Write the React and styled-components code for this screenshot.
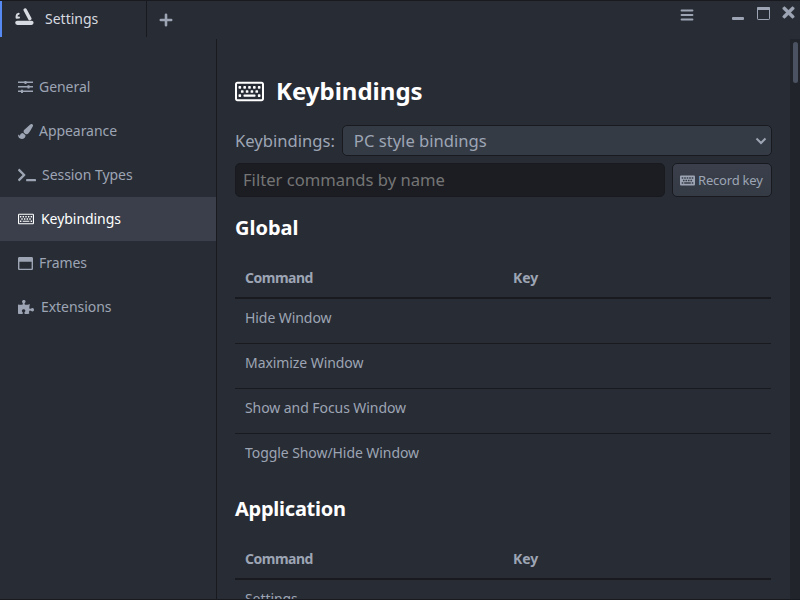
import React from 'react';
import styled, { createGlobalStyle, css } from 'styled-components';
import {
  FaRegKeyboard, FaKeyboard, FaPaintBrush, FaTerminal, FaRegWindowMaximize,
  FaPuzzlePiece, FaTimes,
} from 'react-icons/fa';

const GlobalStyle = createGlobalStyle`
  * { box-sizing: border-box; }
  body {
    margin: 0;
    overflow: hidden;
    background: #282c34;
    color: #9da5b4;
    font-family: "Noto Sans", sans-serif;
    font-size: 14px;
  }
  svg { display: block; flex: none; }
`;

const Window = styled.div`
  width: 800px;
  height: 600px;
  display: flex;
  flex-direction: column;
  overflow: hidden;
  background: #282c34;
  border-top: 1px solid #181a1f;
  border-bottom: 1px solid #181a1f;
`;

const TitleBar = styled.header`
  height: 38px;
  flex: none;
  display: flex;
  align-items: flex-start;
`;

const Tab = styled.div`
  width: 147px;
  height: 36px;
  display: flex;
  align-items: center;
  gap: 10px;
  padding-left: 13px;
  border-left: 2px solid #568af2;
  border-right: 1px solid #181a1f;
  color: #d7dae0;
`;

const IconButton = styled.div`
  width: ${(p) => p.$width}px;
  margin-top: ${(p) => p.$top}px;
  margin-left: ${(p) => p.$left || 0}px;
  margin-right: ${(p) => p.$gap || 0}px;
`;

const WindowControls = styled.div`
  margin-left: auto;
  display: flex;
`;

const Body = styled.div`
  flex: 1;
  min-height: 0;
  display: flex;
`;

const Sidebar = styled.nav`
  width: 217px;
  flex: none;
  padding-top: 26px;
  border-right: 1px solid #181a1f;
`;

const NavItem = styled.div`
  height: 44px;
  display: flex;
  align-items: center;
  gap: ${(p) => p.$gap || 7}px;
  padding-left: 18px;
  ${(p) => p.$active && css`
    background: #3a3f4b;
    color: #ffffff;
  `}
`;

const Label = styled.span`
  white-space: nowrap;
  line-height: 20px;
  letter-spacing: ${(p) => p.$spacing || 0}px;
`;

const Content = styled.main`
  flex: 1;
  min-width: 0;
  padding: 36px 18px 0 18px;
  overflow: hidden;
`;

const PageTitle = styled.h1`
  margin: 0;
  height: 32px;
  display: flex;
  align-items: center;
  gap: 12px;
  color: #ffffff;
  font-size: 24px;
  font-weight: 700;
  line-height: 32px;
`;

const FieldRow = styled.div`
  display: flex;
  align-items: center;
  height: ${(p) => p.$height}px;
  margin-top: ${(p) => p.$top}px;
  gap: 7px;
  font-size: 16.6px;
`;

const Select = styled.div`
  flex: 1;
  height: 31px;
  display: flex;
  align-items: center;
  justify-content: space-between;
  padding: 0 4px 0 11px;
  background: #353b45;
  border: 1px solid #181a1f;
  border-radius: 5px;
`;

const FilterInput = styled.input`
  width: 430px;
  height: 34px;
  padding: 0 7px 2px;
  background: #1b1d23;
  border: 1px solid #181a1f;
  border-radius: 5px;
  font: inherit;
  &::placeholder { color: #757575; opacity: 1; }
`;

const RecordButton = styled.div`
  flex: 1;
  height: 34px;
  display: flex;
  align-items: center;
  gap: 3px;
  padding-left: 7px;
  font-size: 13px;
  background: linear-gradient(#3a3f4b, #353b45);
  border: 1px solid #181a1f;
  border-radius: 5px;
`;

const SectionTitle = styled.h2`
  margin: ${(p) => p.$top}px 0 0;
  color: #ffffff;
  font-size: 20px;
  line-height: 28px;
  height: 28px;
  letter-spacing: ${(p) => p.$spacing || 0}px;
`;

const Table = styled.div`
  margin: 16px 1px 0 0;
`;

const TableRow = styled.div`
  height: 45px;
  display: grid;
  grid-template-columns: 268px 1fr;
  align-items: start;
  padding: 9px 10px 0;
  border-bottom: 1px solid ${(p) => (p.$last ? 'transparent' : '#181a1f')};
`;

const TableHead = styled(TableRow)`
  height: 41px;
  padding-top: 10px;
  font-weight: 700;
  border-bottom-width: 2px;
`;

const Scrollbar = styled.div`
  width: 10px;
  flex: none;
  padding: 3px 2px 0 3px;
  background: #21252b;
`;

const Thumb = styled.div`
  height: 41px;
  border-radius: 3px;
  background: #4b5362;
`;

const LogoIcon = () => (
  <svg width="20" height="22" viewBox="0 0 20 22">
    <g fill="none" stroke="currentColor" strokeLinecap="round" strokeLinejoin="round">
      <path d="M2.3 14.8h14.2" strokeWidth="4.2" />
      <path d="M10.2 2l4.6 8.6" strokeWidth="3.4" />
      <path d="M3.7 5.8Q1.7 6.2 1.6 8v1.8L4 9.6" strokeWidth="2" />
    </g>
  </svg>
);

const PlusIcon = () => (
  <svg width="14" height="14" viewBox="0 0 14 14">
    <path d="M7 1.8v10.4M1.8 7h10.4" stroke="currentColor" strokeWidth="2.6" strokeLinecap="round" />
  </svg>
);

const MenuIcon = () => (
  <svg width="14" height="12" viewBox="0 0 14 12">
    <path d="M1.5 1.5h11M1.5 6h11M1.5 10.5h11" stroke="currentColor" strokeWidth="1.8" strokeLinecap="round" />
  </svg>
);

const SlidersIcon = () => (
  <svg width="15" height="13" viewBox="0 0 15 13">
    <path fill="currentColor" d="M0 .5h15v1.6H0zM0 5h15v1.6H0zM0 9.5h15v1.6H0zM6.5 0h2v3h-2zM9.5 4.2h2v3.2h-2zM3 8.7h2v3.2H3z" />
  </svg>
);

const ChevronIcon = () => (
  <svg width="12" height="8" viewBox="0 0 12 8">
    <path d="M1.5 1.5L6 6l4.5-4.5" fill="none" stroke="currentColor" strokeWidth="2" />
  </svg>
);

const MinimizeIcon = () => (
  <svg width="12" height="3" viewBox="0 0 12 3">
    <rect width="12" height="3" rx="1" fill="currentColor" />
  </svg>
);

const MaximizeIcon = () => (
  <svg width="13" height="13" viewBox="0 0 13 13">
    <rect x=".5" y=".5" width="12" height="12" rx=".7" fill="none" stroke="currentColor" />
    <rect width="13" height="3" rx="1" fill="currentColor" />
  </svg>
);

const NAV = [
  { label: 'General', icon: <SlidersIcon />, gap: 6 },
  { label: 'Appearance', icon: <FaPaintBrush size={15} />, gap: 6 },
  { label: 'Session Types', icon: <FaTerminal size={18} />, gap: 6 },
  { label: 'Keybindings', icon: <FaRegKeyboard size={16} />, active: true },
  { label: 'Frames', icon: <FaRegWindowMaximize size={15} />, gap: 6 },
  { label: 'Extensions', icon: <FaPuzzlePiece size={16} /> },
];

const SECTIONS = [
  { title: 'Global', top: 17, rows: ['Hide Window', 'Maximize Window', 'Show and Focus Window', 'Toggle Show/Hide Window'] },
  { title: 'Application', top: 16, spacing: -0.25, rows: ['Settings'] },
];

export default function App() {
  return (
    <>
      <GlobalStyle />
      <Window>
        <TitleBar>
          <Tab><LogoIcon /><Label>Settings</Label></Tab>
          <IconButton $width={14} $top={12} $left={12}><PlusIcon /></IconButton>
          <WindowControls>
            <IconButton $width={14} $top={8} $gap={38}><MenuIcon /></IconButton>
            <IconButton $width={12} $top={16} $gap={13}><MinimizeIcon /></IconButton>
            <IconButton $width={13} $top={6} $gap={10}><MaximizeIcon /></IconButton>
            <IconButton $width={17} $top={3} $gap={3}>
              <FaTimes size={17} stroke="currentColor" strokeWidth={14} />
            </IconButton>
          </WindowControls>
        </TitleBar>
        <Body>
          <Sidebar>
            {NAV.map((n) => (
              <NavItem key={n.label} $active={n.active} $gap={n.gap}>
                {n.icon}<Label $spacing={-0.05}>{n.label}</Label>
              </NavItem>
            ))}
          </Sidebar>
          <Content>
            <PageTitle><FaRegKeyboard size={29} />Keybindings</PageTitle>
            <FieldRow $height={31} $top={18}>
              <Label>Keybindings:</Label>
              <Select><Label>PC style bindings</Label><ChevronIcon /></Select>
            </FieldRow>
            <FieldRow $height={34} $top={7}>
              <FilterInput placeholder="Filter commands by name" />
              <RecordButton><FaKeyboard size={15} /><Label $spacing={-0.2}>Record key</Label></RecordButton>
            </FieldRow>
            {SECTIONS.map((s) => (
              <section key={s.title}>
                <SectionTitle $top={s.top} $spacing={s.spacing}>{s.title}</SectionTitle>
                <Table>
                  <TableHead><Label $spacing={-0.5}>Command</Label><Label>Key</Label></TableHead>
                  {s.rows.map((r, i) => (
                    <TableRow key={r} $last={i === s.rows.length - 1}><Label $spacing={-0.07}>{r}</Label></TableRow>
                  ))}
                </Table>
              </section>
            ))}
          </Content>
          <Scrollbar><Thumb /></Scrollbar>
        </Body>
      </Window>
    </>
  );
}
